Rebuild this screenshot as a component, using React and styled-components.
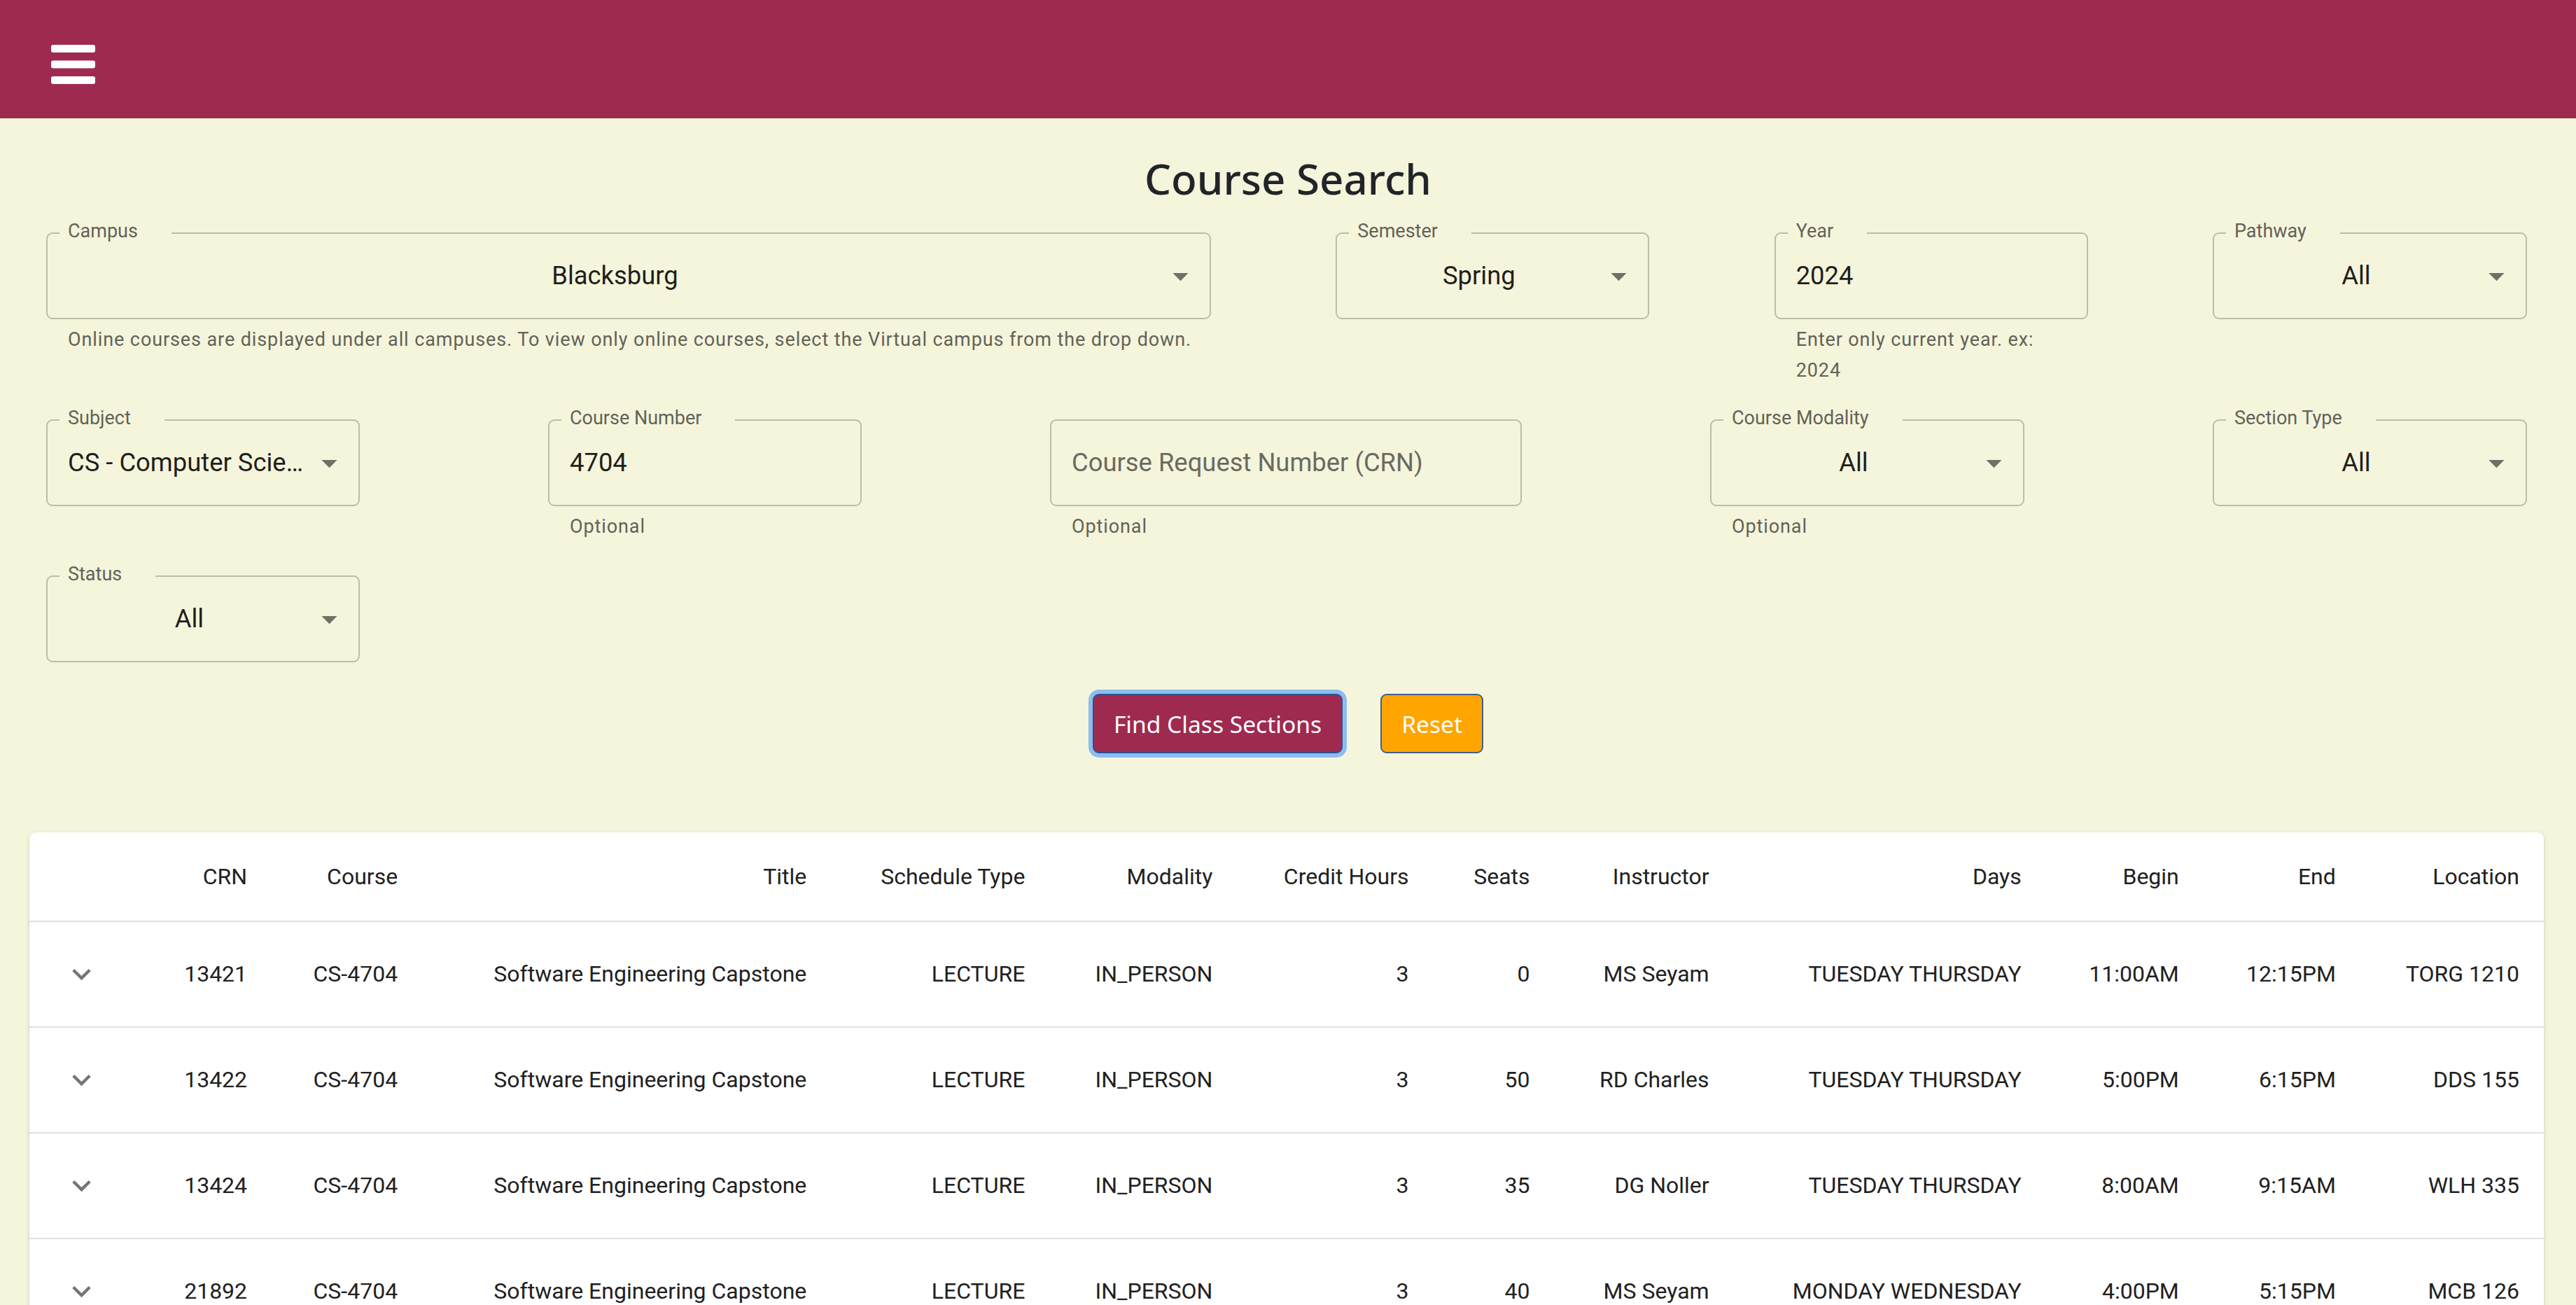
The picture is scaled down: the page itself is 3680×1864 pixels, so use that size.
import React from 'react';
import styled, { createGlobalStyle } from 'styled-components';

const GlobalStyle = createGlobalStyle`
  html, body {
    margin: 0;
    padding: 0;
    overflow: hidden;
  }
  body {
    background: #f5f5dc;
    font-family: Roboto, "Liberation Sans", sans-serif;
  }
  * {
    box-sizing: border-box;
  }
`;

const Page = styled.div`
  width: 100%;
  min-height: 100vh;
  background: #f5f5dc;
`;

const TopBar = styled.header`
  height: 169px;
  background: #9f2a50;
  display: flex;
  align-items: center;
  padding: 15px 0 0 73px;
`;

const MenuButton = styled.button`
  border: none;
  background: none;
  padding: 0;
  display: flex;
  cursor: pointer;
`;

const Title = styled.h1`
  margin: 49px 0 40px;
  text-align: center;
  font-family: "Noto Sans", "Open Sans", sans-serif;
  font-weight: 500;
  font-size: 60px;
  line-height: 1.24;
  color: #212529;
`;

const Form = styled.div`
  display: flex;
  flex-direction: column;
  gap: 48px;
  padding: 0 70px 0 66px;
`;

const FieldRow = styled.div`
  display: flex;
  justify-content: space-between;
  align-items: flex-start;
`;

const Field = styled.div`
  flex: none;
  width: ${(p) => p.$w}px;
`;

const Outline = styled.div`
  position: relative;
  height: 124px;
  border: 2px solid #bdbda9;
  border-radius: 9px;
  display: flex;
  align-items: center;
  padding: 0 ${(p) => (p.$select ? '15px' : '31px')} 0 29px;
`;

const FloatLabel = styled.span`
  position: absolute;
  top: -17px;
  left: 17px;
  padding: 0 48px 0 12px;
  background: #f5f5dc;
  font-size: 27px;
  line-height: 1;
  color: #626258;
  white-space: nowrap;
`;

const Value = styled.div`
  flex: 1;
  min-width: 0;
  font-size: 36.4px;
  line-height: 1.4375;
  color: ${(p) => (p.$placeholder ? '#6a6a60' : '#1f1f1c')};
  text-align: ${(p) => (p.$center ? 'center' : 'left')};
  white-space: nowrap;
  overflow: hidden;
  text-overflow: ellipsis;
`;

const Caret = styled.svg`
  flex: none;
  width: 53px;
  height: 53px;
  fill: #707066;
`;

const Helper = styled.div`
  margin: 7px 31px 0;
  font-size: 27px;
  line-height: 44px;
  letter-spacing: 0.9px;
  color: #626258;
  white-space: ${(p) => (p.$nowrap ? 'nowrap' : 'normal')};
`;

const Actions = styled.div`
  display: flex;
  justify-content: center;
  gap: 54px;
  margin-top: 45px;
`;

const Button = styled.button`
  height: 85px;
  padding: 0 28px;
  border: 2px solid ${(p) => p.$border};
  border-radius: 9px;
  background: ${(p) => p.$bg};
  color: #fff;
  font-family: "Noto Sans", "Open Sans", sans-serif;
  font-size: 33.6px;
  line-height: 1.5;
  box-shadow: ${(p) => (p.$focus ? '0 0 0 6px #8dbdee' : 'none')};
  cursor: pointer;
`;

const Paper = styled.div`
  margin: 113px 46px 0 42px;
  background: #fff;
  border-radius: 9px;
  overflow: hidden;
  box-shadow: 0 4px 2px -2px rgba(0, 0, 0, 0.2), 0 2px 2px 0 rgba(0, 0, 0, 0.14),
    0 2px 7px 0 rgba(0, 0, 0, 0.12);
`;

const Table = styled.table`
  width: 100%;
  border-collapse: collapse;
  table-layout: fixed;
  font-family: Roboto, "Liberation Sans", sans-serif;
  font-size: 32px;
  color: #212121;
`;

const Col = styled.col`
  width: ${(p) => p.$w}px;
`;

const HeadCell = styled.th`
  height: 127px;
  padding: 0 35px;
  text-align: right;
  font-weight: 400;
  line-height: 1.43;
  border-bottom: 2px solid #e0e0e0;
  white-space: nowrap;
`;

const Cell = styled.td`
  height: 151px;
  padding: 0 35px;
  text-align: right;
  line-height: 1.43;
  border-bottom: 2px solid #e0e0e0;
  white-space: nowrap;
`;

const ExpandCell = styled(Cell)`
  padding: 0 0 0 48px;
  text-align: left;
`;

const Chevron = styled.svg`
  display: block;
  width: 53px;
  height: 53px;
  fill: #757575;
`;

const HamburgerIcon = () => (
  <svg width="63" height="56" viewBox="0 0 63 56">
    <rect x="0" y="0" width="63" height="11" rx="3" fill="#fff" />
    <rect x="0" y="22.5" width="63" height="11" rx="3" fill="#fff" />
    <rect x="0" y="45" width="63" height="11" rx="3" fill="#fff" />
  </svg>
);

const DropArrow = () => (
  <Caret viewBox="0 0 24 24">
    <path d="M7 10l5 5 5-5z" />
  </Caret>
);

const SelectField = ({ w, label, value, helper }) => (
  <Field $w={w}>
    <Outline $select>
      <FloatLabel>{label}</FloatLabel>
      <Value $center>{value}</Value>
      <DropArrow />
    </Outline>
    {helper}
  </Field>
);

const TextField = ({ w, label, value, placeholder, helper }) => (
  <Field $w={w}>
    <Outline>
      {label && <FloatLabel>{label}</FloatLabel>}
      {value ? <Value>{value}</Value> : <Value $placeholder>{placeholder}</Value>}
    </Outline>
    {helper}
  </Field>
);

const columns = [
  { key: 'expand', label: '', w: 150 },
  { key: 'crn', label: 'CRN', w: 196 },
  { key: 'course', label: 'Course', w: 215 },
  { key: 'title', label: 'Title', w: 584 },
  { key: 'type', label: 'Schedule Type', w: 312 },
  { key: 'modality', label: 'Modality', w: 268 },
  { key: 'hours', label: 'Credit Hours', w: 280 },
  { key: 'seats', label: 'Seats', w: 173 },
  { key: 'instructor', label: 'Instructor', w: 256 },
  { key: 'days', label: 'Days', w: 446 },
  { key: 'begin', label: 'Begin', w: 225 },
  { key: 'end', label: 'End', w: 224 },
  { key: 'location', label: 'Location', w: 262 },
];

const sections = [
  { crn: '13421', seats: '0', instructor: 'MS Seyam', days: 'TUESDAY THURSDAY', begin: '11:00AM', end: '12:15PM', location: 'TORG 1210' },
  { crn: '13422', seats: '50', instructor: 'RD Charles', days: 'TUESDAY THURSDAY', begin: '5:00PM', end: '6:15PM', location: 'DDS 155' },
  { crn: '13424', seats: '35', instructor: 'DG Noller', days: 'TUESDAY THURSDAY', begin: '8:00AM', end: '9:15AM', location: 'WLH 335' },
  { crn: '21892', seats: '40', instructor: 'MS Seyam', days: 'MONDAY WEDNESDAY', begin: '4:00PM', end: '5:15PM', location: 'MCB 126' },
].map((s) => ({
  ...s,
  course: 'CS-4704',
  title: 'Software Engineering Capstone',
  type: 'LECTURE',
  modality: 'IN_PERSON',
  hours: '3',
}));

const App = () => {
  return (
    <Page>
      <GlobalStyle />
      <TopBar>
        <MenuButton aria-label="menu">
          <HamburgerIcon />
        </MenuButton>
      </TopBar>

      <Title>Course Search</Title>

      <Form>
        <FieldRow>
          <SelectField
            w={1664}
            label="Campus"
            value="Blacksburg"
            helper={
              <Helper $nowrap>
                Online courses are displayed under all campuses. To view only online courses, select the Virtual campus from the drop down.
              </Helper>
            }
          />
          <SelectField w={448} label="Semester" value="Spring" />
          <TextField
            w={448}
            label="Year"
            value="2024"
            helper={<Helper>Enter only current year. ex: 2024</Helper>}
          />
          <SelectField w={449} label="Pathway" value="All" />
        </FieldRow>

        <FieldRow>
          <SelectField w={448} label="Subject" value="CS - Computer Science" />
          <TextField w={448} label="Course Number" value="4704" helper={<Helper>Optional</Helper>} />
          <TextField w={674} placeholder="Course Request Number (CRN)" helper={<Helper>Optional</Helper>} />
          <SelectField w={449} label="Course Modality" value="All" helper={<Helper>Optional</Helper>} />
          <SelectField w={449} label="Section Type" value="All" />
        </FieldRow>

        <FieldRow>
          <SelectField w={448} label="Status" value="All" />
        </FieldRow>
      </Form>

      <Actions>
        <Button $bg="#9f2a50" $border="#2f4f8f" $focus>
          Find Class Sections
        </Button>
        <Button $bg="#ffa500" $border="#41608a">
          Reset
        </Button>
      </Actions>

      <Paper>
        <Table>
          <colgroup>
            {columns.map((c) => (
              <Col key={c.key} $w={c.w} />
            ))}
          </colgroup>
          <thead>
            <tr>
              {columns.map((c) => (
                <HeadCell key={c.key}>{c.label}</HeadCell>
              ))}
            </tr>
          </thead>
          <tbody>
            {sections.map((s) => (
              <tr key={s.crn}>
                <ExpandCell>
                  <Chevron viewBox="0 0 24 24">
                    <path d="M7.41 8.59 12 13.17l4.59-4.58L18 10l-6 6-6-6z" />
                  </Chevron>
                </ExpandCell>
                {columns.slice(1).map((c) => (
                  <Cell key={c.key}>{s[c.key]}</Cell>
                ))}
              </tr>
            ))}
          </tbody>
        </Table>
      </Paper>
    </Page>
  );
};

export default App;
